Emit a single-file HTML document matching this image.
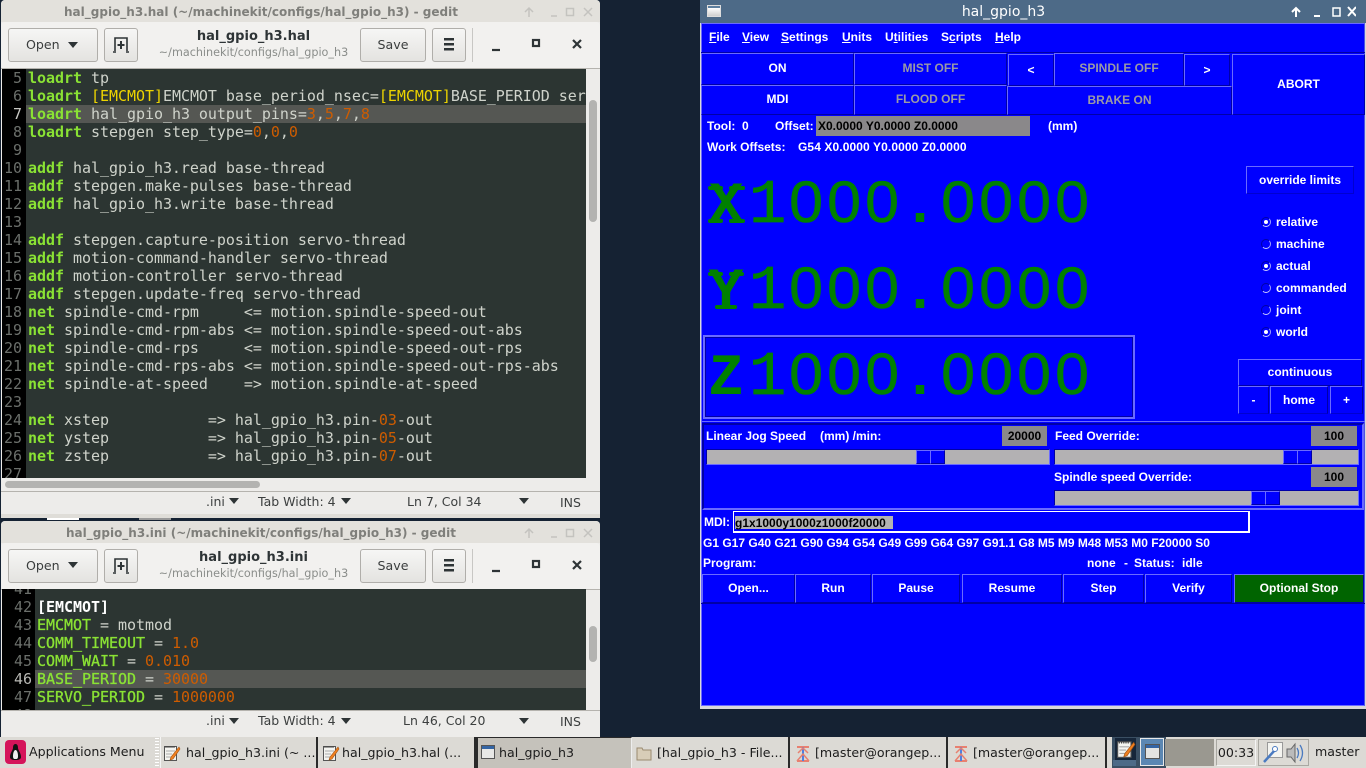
<!DOCTYPE html>
<html><head><meta charset="utf-8"><style>
html,body{margin:0;padding:0;width:1366px;height:768px;overflow:hidden;background:#152233}
*{box-sizing:border-box}
.a,.t{position:absolute}
.t{white-space:pre;line-height:1}
.sans{font-family:"DejaVu Sans",sans-serif}
.win{position:absolute;left:1px;width:599px;background:#edecea;overflow:hidden;border-radius:4px 4px 0 0}
.title{position:absolute;left:0;top:0;width:520px;height:22px;color:#7f7f7b;font:bold 12px "DejaVu Sans",sans-serif;text-align:center;line-height:25px}
.tbg{position:absolute;left:0;top:0;width:599px;height:22px;background:#e3e1dc}
.head{position:absolute;left:0;top:22px;width:599px;height:47px;background:#f2f1ef;border-bottom:1px solid #b5b3ae;border-radius:4px 4px 0 0}
.btn{position:absolute;top:6px;height:34px;border:1px solid #b0aeaa;border-radius:3px;background:linear-gradient(#f6f6f5,#e4e3e0);color:#3a3d3d;font:12.6px "DejaVu Sans",sans-serif;text-align:center;line-height:31px}
.h1{position:absolute;left:0;width:505px;text-align:center;font:bold 13px "DejaVu Sans",sans-serif;color:#2e3436;top:7px}
.h2{position:absolute;left:0;width:505px;text-align:center;font:11.2px "DejaVu Sans",sans-serif;color:#8a8d8a;top:24px}
.sep{position:absolute;left:471px;top:6px;width:1px;height:34px;background:#c8c7c4}
.ed{position:absolute;left:1px;background:#2c3532;overflow:hidden;width:584px}
.gut{position:absolute;left:0;top:0;bottom:0;background:#000}
.cur{position:absolute;height:18px;right:0;background:#555753}
.ln{position:absolute;font:15px/18px "DejaVu Sans Mono",monospace;color:#cfd3cb;white-space:pre;height:18px;left:0;width:584px;letter-spacing:-.035px}
.ln i{font-style:normal;position:absolute;left:0;text-align:right;color:#6b6f6b}
.ln u{text-decoration:none;position:absolute;top:0}
b{color:#8ae234;font-weight:bold}
.n{color:#ce5c00}.y{color:#edd400}
.k{color:#8ae234;-webkit-text-stroke:.3px #8ae234}
.stat{position:absolute;font:12.5px "DejaVu Sans",sans-serif;color:#3c3f3f;white-space:pre}
.tri{position:absolute;width:0;height:0;border-left:5px solid transparent;border-right:5px solid transparent;border-top:6px solid #2e3436}
.sb{position:absolute;background:#b3b3b1;border-radius:4px}
.tk{position:absolute;font:bold 12px "Liberation Sans",sans-serif;color:#fff;white-space:pre;line-height:1}
.bb{position:absolute;border:1px solid;border-color:#6a6aff #0000a6 #0000a6 #6a6aff;background:#00f;color:#fff;font:bold 12px "Liberation Sans",sans-serif;text-align:center;white-space:pre}
.dis{color:#9a9aa6}
.dro{position:absolute;left:710.5px;height:64px;line-height:64px;color:#008000;white-space:nowrap;font-family:"Liberation Sans",sans-serif;font-size:58px}
.dro span{display:inline-block;width:38.1px;text-align:center}
.dro .c{font:bold 58px/64px "Liberation Mono",monospace;position:relative;left:-3.5px}
.dro .one{font:62px/64px "Liberation Mono",monospace;-webkit-text-stroke:.8px #008000}
.dro .o{font:bold 60px/64px "Liberation Mono",monospace}
.dro .d{font:58px/64px "Liberation Sans",sans-serif;-webkit-text-stroke:.6px #008000;transform:scaleX(1.05)}
.ser{position:absolute;background:#008000;border-radius:2px}
.grey{position:absolute;background:#8a888a;color:#000;font:bold 12px "Liberation Sans",sans-serif;text-align:center;white-space:pre}
.sl{position:absolute;background:#b3b1b3;height:16px;border:1px solid;border-color:#0000a6 #6a6aff #6a6aff #0000a6}
.th{position:absolute;top:0;height:14px;width:15px;background:#00f;border:1px solid;border-color:#6a6aff #0000a6 #0000a6 #6a6aff}
.rad{position:absolute;width:10px;height:10px;border-radius:50%;border:1px solid;border-color:#0000a6 #a0a0ff #d0d0ff #0000a6;left:1261px}
.rad.on:after{content:"";position:absolute;left:2px;top:2px;width:4px;height:4px;border-radius:50%;background:#fff}
.tb{position:absolute;top:737px;height:31px;background:#dcdad5;border-right:2px solid #2a2a2a;font:12.6px/31px "DejaVu Sans",sans-serif;color:#1c1c1c;white-space:pre}
</style></head><body>

<!-- HAL window -->
<div class="win" style="top:0;height:518px">
<div class="tbg"></div>
<div class="title">hal_gpio_h3.hal (~/machinekit/configs/hal_gpio_h3) - gedit</div>
<svg class="a" style="left:523px;top:6px" width="72" height="12" fill="none" stroke="#c4c3bf" stroke-width="1.5"><path d="M5 11V2M1 6l4-4 4 4"/><path d="M27 10h6"/><rect x="42.5" y="2.5" width="7" height="7"/><path d="M60 2l8 8M68 2l-8 8"/></svg>
<div class="head">
<div class="btn" style="left:7px;width:90px;text-align:left;padding-left:17px">Open</div><div class="tri" style="left:67px;top:20px"></div>
<div class="btn" style="left:103px;width:34px"></div>
<svg class="a" style="left:112px;top:14px" width="16" height="18" fill="none" stroke="#2e3436" stroke-width="1.6"><path d="M2 15V2h12v13"/><path d="M8 5v8M4.5 9h7" stroke-width="2"/><path d="M0 16h3M13 16h3"/></svg>
<div class="h1">hal_gpio_h3.hal</div>
<div class="h2">~/machinekit/configs/hal_gpio_h3</div>
<div class="btn" style="left:359px;width:66px">Save</div>
<div class="btn" style="left:431px;width:34px"></div>
<svg class="a" style="left:443px;top:16px" width="11" height="13" fill="#2e3436"><rect width="10" height="2.5" y="0"/><rect width="10" height="2.5" y="5"/><rect width="10" height="2.5" y="10"/></svg>
<div class="sep"></div>
<svg class="a" style="left:488px;top:15px" width="100" height="16" fill="none" stroke="#2e3436" stroke-width="2.2"><path d="M3 13h8"/><rect x="44" y="3" width="6" height="6"/><path d="M84 3l8 8M92 3l-8 8"/></svg>
</div>
<div class="ed" style="top:69px;height:409px;left:1px">
<div class="gut" style="left:0;width:24px"></div>
<div class="cur" style="top:36px;left:24px"></div>
<div class="ln" style="top:0"><i style="width:20px">5</i><u style="left:26px"><b>loadrt</b> tp</u></div>
<div class="ln" style="top:18px"><i style="width:20px">6</i><u style="left:26px"><b>loadrt</b> <span class="y">[EMCMOT]</span>EMCMOT base_period_nsec=<span class="y">[EMCMOT]</span>BASE_PERIOD servo_period</u></div>
<div class="ln" style="top:36px"><i style="width:20px;color:#c8c8c4">7</i><u style="left:26px"><b>loadrt</b> hal_gpio_h3 output_pins=<span class="n">3</span>,<span class="n">5</span>,<span class="n">7</span>,<span class="n">8</span></u></div>
<div class="ln" style="top:54px"><i style="width:20px">8</i><u style="left:26px"><b>loadrt</b> stepgen step_type=<span class="n">0</span>,<span class="n">0</span>,<span class="n">0</span></u></div>
<div class="ln" style="top:72px"><i style="width:20px">9</i></div>
<div class="ln" style="top:90px"><i style="width:20px">10</i><u style="left:26px"><b>addf</b> hal_gpio_h3.read base-thread</u></div>
<div class="ln" style="top:108px"><i style="width:20px">11</i><u style="left:26px"><b>addf</b> stepgen.make-pulses base-thread</u></div>
<div class="ln" style="top:126px"><i style="width:20px">12</i><u style="left:26px"><b>addf</b> hal_gpio_h3.write base-thread</u></div>
<div class="ln" style="top:144px"><i style="width:20px">13</i></div>
<div class="ln" style="top:162px"><i style="width:20px">14</i><u style="left:26px"><b>addf</b> stepgen.capture-position servo-thread</u></div>
<div class="ln" style="top:180px"><i style="width:20px">15</i><u style="left:26px"><b>addf</b> motion-command-handler servo-thread</u></div>
<div class="ln" style="top:198px"><i style="width:20px">16</i><u style="left:26px"><b>addf</b> motion-controller servo-thread</u></div>
<div class="ln" style="top:216px"><i style="width:20px">17</i><u style="left:26px"><b>addf</b> stepgen.update-freq servo-thread</u></div>
<div class="ln" style="top:234px"><i style="width:20px">18</i><u style="left:26px"><b>net</b> spindle-cmd-rpm     &lt;= motion.spindle-speed-out</u></div>
<div class="ln" style="top:252px"><i style="width:20px">19</i><u style="left:26px"><b>net</b> spindle-cmd-rpm-abs &lt;= motion.spindle-speed-out-abs</u></div>
<div class="ln" style="top:270px"><i style="width:20px">20</i><u style="left:26px"><b>net</b> spindle-cmd-rps     &lt;= motion.spindle-speed-out-rps</u></div>
<div class="ln" style="top:288px"><i style="width:20px">21</i><u style="left:26px"><b>net</b> spindle-cmd-rps-abs &lt;= motion.spindle-speed-out-rps-abs</u></div>
<div class="ln" style="top:306px"><i style="width:20px">22</i><u style="left:26px"><b>net</b> spindle-at-speed    =&gt; motion.spindle-at-speed</u></div>
<div class="ln" style="top:324px"><i style="width:20px">23</i></div>
<div class="ln" style="top:342px"><i style="width:20px">24</i><u style="left:26px"><b>net</b> xstep           =&gt; hal_gpio_h3.pin-<span class="n">03</span>-out</u></div>
<div class="ln" style="top:360px"><i style="width:20px">25</i><u style="left:26px"><b>net</b> ystep           =&gt; hal_gpio_h3.pin-<span class="n">05</span>-out</u></div>
<div class="ln" style="top:378px"><i style="width:20px">26</i><u style="left:26px"><b>net</b> zstep           =&gt; hal_gpio_h3.pin-<span class="n">07</span>-out</u></div>
<div class="ln" style="top:396px"><i style="width:20px">27</i></div>
</div>
<div class="sb" style="left:588px;top:100px;width:8px;height:122px"></div>
<div class="a" style="left:0;top:478px;width:599px;height:13px;background:#edecea"></div>
<div class="sb" style="left:4px;top:481px;width:255px;height:7px"></div>
<div class="a" style="left:0;top:491px;width:599px;height:1px;background:#b5b3ae"></div>
<div class="stat" style="left:205px;top:494px">.ini</div><div class="tri" style="left:228px;top:498px"></div>
<div class="stat" style="left:257px;top:494px">Tab Width: 4</div><div class="tri" style="left:340px;top:498px"></div>
<div class="stat" style="left:406px;top:494px">Ln 7, Col 34</div><div class="tri" style="left:518px;top:498px"></div>
<div class="stat" style="left:559px;top:495px">INS</div>
<div class="a" style="left:0;top:514px;width:599px;height:4px;background:#dfddd8"></div>
</div>
<div class="a" style="left:47px;top:518px;width:32px;height:2px;background:#fff"></div>
<div class="a" style="left:139px;top:518px;width:32px;height:2px;background:#999"></div>

<!-- INI window -->
<div class="win" style="top:521px;height:216px">
<div class="tbg"></div>
<div class="title">hal_gpio_h3.ini (~/machinekit/configs/hal_gpio_h3) - gedit</div>
<svg class="a" style="left:523px;top:6px" width="72" height="12" fill="none" stroke="#c4c3bf" stroke-width="1.5"><path d="M5 11V2M1 6l4-4 4 4"/><path d="M27 10h6"/><rect x="42.5" y="2.5" width="7" height="7"/><path d="M60 2l8 8M68 2l-8 8"/></svg>
<div class="head">
<div class="btn" style="left:7px;width:90px;text-align:left;padding-left:17px">Open</div><div class="tri" style="left:67px;top:19px"></div>
<div class="btn" style="left:103px;width:34px"></div>
<svg class="a" style="left:112px;top:14px" width="16" height="18" fill="none" stroke="#2e3436" stroke-width="1.6"><path d="M2 15V2h12v13"/><path d="M8 5v8M4.5 9h7" stroke-width="2"/><path d="M0 16h3M13 16h3"/></svg>
<div class="h1">hal_gpio_h3.ini</div>
<div class="h2">~/machinekit/configs/hal_gpio_h3</div>
<div class="btn" style="left:359px;width:66px">Save</div>
<div class="btn" style="left:431px;width:34px"></div>
<svg class="a" style="left:443px;top:16px" width="11" height="13" fill="#2e3436"><rect width="10" height="2.5" y="0"/><rect width="10" height="2.5" y="5"/><rect width="10" height="2.5" y="10"/></svg>
<div class="sep"></div>
<svg class="a" style="left:488px;top:15px" width="100" height="16" fill="none" stroke="#2e3436" stroke-width="2.2"><path d="M3 13h8"/><rect x="44" y="3" width="6" height="6"/><path d="M84 3l8 8M92 3l-8 8"/></svg>
</div>
<div class="ed" style="top:68px;height:121px">
<div class="gut" style="width:33px"></div>
<div class="cur" style="top:81px;left:33px"></div>
<div class="ln" style="top:-9px"><i style="width:30px">41</i></div>
<div class="ln" style="top:9px"><i style="width:30px">42</i><u style="left:35px;color:#fff;font-weight:bold">[EMCMOT]</u></div>
<div class="ln" style="top:27px"><i style="width:30px">43</i><u style="left:35px"><span class="k">EMCMOT</span> = motmod</u></div>
<div class="ln" style="top:45px"><i style="width:30px">44</i><u style="left:35px"><span class="k">COMM_TIMEOUT</span> = <span class="n">1.0</span></u></div>
<div class="ln" style="top:63px"><i style="width:30px">45</i><u style="left:35px"><span class="k">COMM_WAIT</span> = <span class="n">0.010</span></u></div>
<div class="ln" style="top:81px"><i style="width:30px;color:#b8b8b4">46</i><u style="left:35px"><span class="k">BASE_PERIOD</span> = <span class="n">30000</span></u></div>
<div class="ln" style="top:99px"><i style="width:30px">47</i><u style="left:35px"><span class="k">SERVO_PERIOD</span> = <span class="n">1000000</span></u></div>
<div class="ln" style="top:117px"><i style="width:30px">48</i></div>
</div>
<div class="sb" style="left:588px;top:105px;width:8px;height:36px"></div>
<div class="a" style="left:0;top:189px;width:599px;height:1px;background:#b5b3ae"></div>
<div class="stat" style="left:205px;top:192px">.ini</div><div class="tri" style="left:228px;top:197px"></div>
<div class="stat" style="left:257px;top:192px">Tab Width: 4</div><div class="tri" style="left:340px;top:197px"></div>
<div class="stat" style="left:402px;top:192px">Ln 46, Col 20</div><div class="tri" style="left:518px;top:197px"></div>
<div class="stat" style="left:559px;top:193px">INS</div>
</div>

<!-- TK window -->
<div class="a" style="left:700px;top:0;width:666px;height:709px;background:#d9d9d9"></div>
<div class="a" style="left:700px;top:0;width:666px;height:23px;background:#4d6a87"></div>
<div class="a" style="left:700px;top:0;width:607px;height:23px;color:#fff;font:14px/25px 'DejaVu Sans',sans-serif;text-align:center">hal_gpio_h3</div>
<div class="a" style="left:707px;top:5px;width:14px;height:12px;background:linear-gradient(#5d7f9f 0 2px,#fff 2px,#cfcfcf);border:1px solid #ddd"></div>
<svg class="a" style="left:1290px;top:5px" width="66" height="14" fill="none" stroke="#fff" stroke-width="2"><path d="M6 12V3M2 7l4-4 4 4"/><path d="M24 11h6"/><rect x="43" y="3" width="7" height="8" stroke-width="1.5"/><path d="M58 2l8 9M66 2l-8 9"/></svg>
<div class="a" style="left:701px;top:23px;width:664px;height:683px;background:#00f;border:1px solid #6a6aff;border-right-color:#5050e0"></div>

<div class="tk" style="left:709px;top:31px"><span style="text-decoration:underline">F</span>ile</div>
<div class="tk" style="left:742px;top:31px"><span style="text-decoration:underline">V</span>iew</div>
<div class="tk" style="left:781px;top:31px"><span style="text-decoration:underline">S</span>ettings</div>
<div class="tk" style="left:842px;top:31px"><span style="text-decoration:underline">U</span>nits</div>
<div class="tk" style="left:885px;top:31px">U<span style="text-decoration:underline">t</span>ilities</div>
<div class="tk" style="left:941px;top:31px">S<span style="text-decoration:underline">c</span>ripts</div>
<div class="tk" style="left:995px;top:31px"><span style="text-decoration:underline">H</span>elp</div>
<div class="a" style="left:701px;top:52px;width:664px;height:1px;background:#0000a6"></div>

<div class="bb" style="left:701px;top:53px;width:153px;height:32px;line-height:28px">ON</div>
<div class="bb dis" style="left:854px;top:53px;width:153px;height:32px;line-height:28px">MIST OFF</div>
<div class="bb" style="left:701px;top:85px;width:153px;height:30px;line-height:27px">MDI</div>
<div class="bb dis" style="left:854px;top:85px;width:153px;height:30px;line-height:27px">FLOOD OFF</div>
<div class="bb" style="left:1008px;top:54px;width:46px;height:32px;line-height:31px">&lt;</div>
<div class="bb dis" style="left:1054px;top:53px;width:130px;height:33px;line-height:29px">SPINDLE OFF</div>
<div class="bb" style="left:1184px;top:54px;width:46px;height:32px;line-height:31px">&gt;</div>
<div class="bb dis" style="left:1007px;top:86px;width:225px;height:29px;line-height:26px">BRAKE ON</div>
<div class="bb" style="left:1232px;top:54px;width:133px;height:61px;line-height:58px">ABORT</div>

<div class="tk" style="left:707px;top:120px">Tool:</div>
<div class="tk" style="left:742px;top:120px">0</div>
<div class="tk" style="left:775px;top:120px">Offset:</div>
<div class="grey" style="left:816px;top:116px;width:214px;height:20px;line-height:20px;text-align:left;padding-left:2px">X0.0000 Y0.0000 Z0.0000</div>
<div class="tk" style="left:1048px;top:120px">(mm)</div>
<div class="tk" style="left:707px;top:141px">Work Offsets:</div>
<div class="tk" style="left:798px;top:141px;letter-spacing:.1px">G54 X0.0000 Y0.0000 Z0.0000</div>

<div class="dro" style="top:171px"><span class="c">X</span><span class="one">1</span><span class="d">0</span><span class="d">0</span><span class="d">0</span><span class="o">.</span><span class="d">0</span><span class="d">0</span><span class="d">0</span><span class="d">0</span></div>
<div class="ser" style="left:708px;top:186px;width:15px;height:4px"></div>
<div class="ser" style="left:729px;top:186px;width:16px;height:4px"></div>
<div class="ser" style="left:708px;top:219px;width:15px;height:4px"></div>
<div class="ser" style="left:729px;top:219px;width:16px;height:4px"></div>
<div class="dro" style="top:257px"><span class="c">Y</span><span class="one">1</span><span class="d">0</span><span class="d">0</span><span class="d">0</span><span class="o">.</span><span class="d">0</span><span class="d">0</span><span class="d">0</span><span class="d">0</span></div>
<div class="ser" style="left:708px;top:272px;width:15px;height:4px"></div>
<div class="ser" style="left:729px;top:272px;width:15px;height:4px"></div>
<div class="ser" style="left:715px;top:305px;width:22px;height:4px"></div>
<div class="a" style="left:703px;top:335px;width:432px;height:84px;border:2px solid #6a6aff;box-shadow:inset -1px -1px 0 #0000a6,inset 1px 1px 0 #0000a6"></div>
<div class="dro" style="top:343px"><span class="c">Z</span><span class="one">1</span><span class="d">0</span><span class="d">0</span><span class="d">0</span><span class="o">.</span><span class="d">0</span><span class="d">0</span><span class="d">0</span><span class="d">0</span></div>

<div class="bb" style="left:1246px;top:166px;width:108px;height:28px;line-height:26px;border-right-color:#0000d0;border-bottom-color:#0000d0">override limits</div>

<div class="rad on" style="top:217px"></div><div class="tk" style="left:1276px;top:216px">relative</div>
<div class="rad" style="top:239px"></div><div class="tk" style="left:1276px;top:238px">machine</div>
<div class="rad on" style="top:261px"></div><div class="tk" style="left:1276px;top:260px">actual</div>
<div class="rad" style="top:283px"></div><div class="tk" style="left:1276px;top:282px">commanded</div>
<div class="rad" style="top:305px"></div><div class="tk" style="left:1276px;top:304px">joint</div>
<div class="rad on" style="top:327px"></div><div class="tk" style="left:1276px;top:326px">world</div>

<div class="bb" style="left:1238px;top:359px;width:124px;height:27px;line-height:25px">continuous</div>
<div class="bb" style="left:1238px;top:386px;width:31px;height:28px;line-height:27px;border-bottom-color:#0000d0">-</div>
<div class="bb" style="left:1270px;top:386px;width:58px;height:28px;line-height:26px;border-bottom-color:#0000d0">home</div>
<div class="bb" style="left:1330px;top:386px;width:33px;height:28px;line-height:27px;border-bottom-color:#0000d0">+</div>

<div class="a" style="left:702px;top:423px;width:662px;height:87px;border:2px solid;border-color:#0000a6 #6a6aff #6a6aff #0000a6"></div>
<div class="a" style="left:701px;top:421px;width:664px;height:1px;background:#6a6aff"></div>
<div class="tk" style="left:706px;top:430px">Linear Jog Speed</div>
<div class="tk" style="left:820px;top:430px">(mm) /min:</div>
<div class="grey" style="left:1002px;top:426px;width:45px;height:20px;line-height:20px">20000</div>
<div class="tk" style="left:1055px;top:430px">Feed Override:</div>
<div class="grey" style="left:1311px;top:426px;width:46px;height:20px;line-height:20px">100</div>
<div class="sl" style="left:706px;top:449px;width:344px"><div class="th" style="left:209px"></div><div class="th" style="left:223px"></div></div>
<div class="sl" style="left:1054px;top:449px;width:305px"><div class="th" style="left:228px"></div><div class="th" style="left:242px"></div></div>
<div class="tk" style="left:1054px;top:471px">Spindle speed Override:</div>
<div class="grey" style="left:1311px;top:467px;width:46px;height:20px;line-height:20px">100</div>
<div class="sl" style="left:1054px;top:490px;width:305px"><div class="th" style="left:196px"></div><div class="th" style="left:210px"></div></div>

<div class="tk" style="left:704px;top:516px">MDI:</div>
<div class="a" style="left:733px;top:511px;width:517px;height:22px;border:2px solid #fff;border-width:1px 2px 2px 1px"></div>
<div class="a" style="left:735px;top:516px;width:158px;height:13px;background:#b3b3b3;color:#000;font:bold 12px/14px 'Liberation Sans',sans-serif;white-space:pre">g1x1000y1000z1000f20000</div>
<div class="tk" style="left:703px;top:537px">G1 G17 G40 G21 G90 G94 G54 G49 G99 G64 G97 G91.1 G8 M5 M9 M48 M53 M0 F20000 S0</div>
<div class="tk" style="left:703px;top:557px">Program:</div>
<div class="tk" style="left:1087px;top:557px">none</div>
<div class="tk" style="left:1124px;top:557px">-</div>
<div class="tk" style="left:1134px;top:557px">Status:</div>
<div class="tk" style="left:1182px;top:557px">idle</div>

<div class="bb" style="left:702px;top:574px;width:93px;height:29px;line-height:27px">Open...</div>
<div class="bb" style="left:795px;top:574px;width:76px;height:29px;line-height:27px">Run</div>
<div class="bb" style="left:872px;top:574px;width:88px;height:29px;line-height:27px">Pause</div>
<div class="bb" style="left:962px;top:574px;width:100px;height:29px;line-height:27px">Resume</div>
<div class="bb" style="left:1063px;top:574px;width:81px;height:29px;line-height:27px">Step</div>
<div class="bb" style="left:1145px;top:574px;width:87px;height:29px;line-height:27px">Verify</div>
<div class="bb" style="left:1234px;top:574px;width:130px;height:29px;line-height:27px;background:#006400">Optional Stop</div>
<div class="a" style="left:701px;top:603px;width:664px;height:1px;background:#0000a6"></div>

<!-- Taskbar -->
<div class="a" style="left:0;top:737px;width:1366px;height:31px;background:#dcdad5"></div>
<svg class="a" style="left:5px;top:739px" width="22" height="26"><rect x="0" y="1" width="21" height="24" rx="4" fill="#d5145a"/><path d="M10.5 5c2 0 2.5 2 2.5 4 0 2 3 5 3 9 0 2-2 3-5.5 3S5 20 5 18c0-4 3-7 3-9 0-2 .5-4 2.5-4z" fill="#111"/><path d="M10.5 11c1.5 0 2.5 3 2.5 6s-1 3-2.5 3-2.5 0-2.5-3 1-6 2.5-6z" fill="#eee"/></svg>
<div class="t sans" style="left:29px;top:746px;font-size:12.6px;color:#1c1c1c">Applications Menu</div>
<div class="a" style="left:155px;top:738px;width:4px;height:29px;background:repeating-linear-gradient(#fff 0 1px,transparent 1px 3px)"></div>

<div class="tb" style="left:160px;width:158px;padding-left:25px;background:#dcdad5;border-left:1px solid #f4f4f4">hal_gpio_h3.ini (~ ...</div>
<div class="tb" style="left:318px;width:158px;padding-left:24px">hal_gpio_h3.hal (...</div>
<div class="tb" style="left:476px;width:156px;padding-left:21px;background:#c5c2bb;border-left:2px solid #2a2a2a;border-top:1px solid #2a2a2a;border-right:1px solid #eee;line-height:30px">hal_gpio_h3</div>
<div class="tb" style="left:632px;width:158px;padding-left:25px">[hal_gpio_h3 - File...</div>
<div class="tb" style="left:790px;width:158px;padding-left:25px">[master@orangep...</div>
<div class="tb" style="left:948px;width:159px;padding-left:25px">[master@orangep...</div>

<svg width="0" height="0" style="position:absolute"><defs>
<symbol id="ped" viewBox="0 0 18 18"><rect x="1.5" y="2.5" width="12" height="14" fill="#f4f4f0" stroke="#555"/><path d="M3 2v2M5 2v2M7 2v2M9 2v2M11 2v2" stroke="#444"/><path d="M3 7h9M3 10h6M3 13h5" stroke="#aaa"/><path d="M16 3L8 13l-1 3 3-1L17 5z" fill="#f08020" stroke="#a05010" stroke-width=".6"/></symbol>
<symbol id="pt" viewBox="0 0 18 18"><path d="M3 2h12M3 16h12" stroke="#e88070" stroke-width="2"/><path d="M9 2v14" stroke="#5080e0" stroke-width="2"/><path d="M4 8l5-5 5 5M3 16l6-7 6 7" fill="none" stroke="#e88070" stroke-width="1.5"/></symbol>
</defs></svg>
<svg class="a" style="left:163px;top:744px" width="18" height="18"><use href="#ped"/></svg>
<svg class="a" style="left:322px;top:744px" width="18" height="18"><use href="#ped"/></svg>
<svg class="a" style="left:481px;top:745px" width="14" height="14"><rect x=".5" y=".5" width="13" height="13" fill="#e8e8e6" stroke="#555"/><rect x="1" y="1" width="12" height="3" fill="#3465a4"/></svg>
<svg class="a" style="left:636px;top:745px" width="16" height="16"><path d="M1 3h5l1 2h8v10H1z" fill="#d8cdb8" stroke="#9a8a70"/></svg>
<svg class="a" style="left:794px;top:745px" width="18" height="18"><use href="#pt"/></svg>
<svg class="a" style="left:952px;top:745px" width="18" height="18"><use href="#pt"/></svg>

<div class="a" style="left:1112px;top:737px;width:54px;height:31px;background:#3a4f63"></div>
<div class="a" style="left:1115px;top:738px;width:21px;height:22px;background:#16263a"></div>
<svg class="a" style="left:1116px;top:739px" width="20" height="20"><use href="#ped"/></svg>
<div class="a" style="left:1113px;top:760px;width:23px;height:6px;background:#4d6a87"></div>
<div class="a" style="left:1140px;top:738px;width:24px;height:28px;background:#5b87b3;border:1px solid #e8e8e8"></div>
<svg class="a" style="left:1145px;top:744px" width="15" height="15"><rect x=".5" y=".5" width="14" height="14" fill="#e4e4e2" stroke="#555"/><rect x="1" y="1" width="13" height="3" fill="#3465a4"/></svg>
<div class="a" style="left:1165px;top:739px;width:49px;height:27px;background:#9a9890"></div>
<div class="a" style="left:1216px;top:739px;width:40px;height:27px;border:1px solid #a9a8a2;border-right-color:#f4f4f4;border-bottom-color:#f4f4f4;font:12.6px/26px 'DejaVu Sans',sans-serif;color:#1c1c1c;text-align:center">00:33</div>
<div class="a" style="left:1258px;top:739px;width:51px;height:27px;border:1px solid #a9a8a2"></div>
<svg class="a" style="left:1262px;top:742px" width="44" height="22"><rect x="5.5" y=".5" width="15" height="15" fill="#f4f4f0" stroke="#999"/><path d="M2 20L13 8" stroke="#4a7ac0" stroke-width="2.5"/><circle cx="13" cy="7" r="2.5" fill="#fff" stroke="#4a7ac0"/><path d="M25 7h4l4-5v18l-4-5h-4z" fill="#bbb" stroke="#666"/><path d="M35 6q3 5 0 10M38 3q5 8 0 16" fill="none" stroke="#4a7ac0" stroke-width="1.3"/></svg>
<div class="t sans" style="left:1315px;top:746px;font-size:12.6px;color:#1c1c1c">master</div>
</body></html>
